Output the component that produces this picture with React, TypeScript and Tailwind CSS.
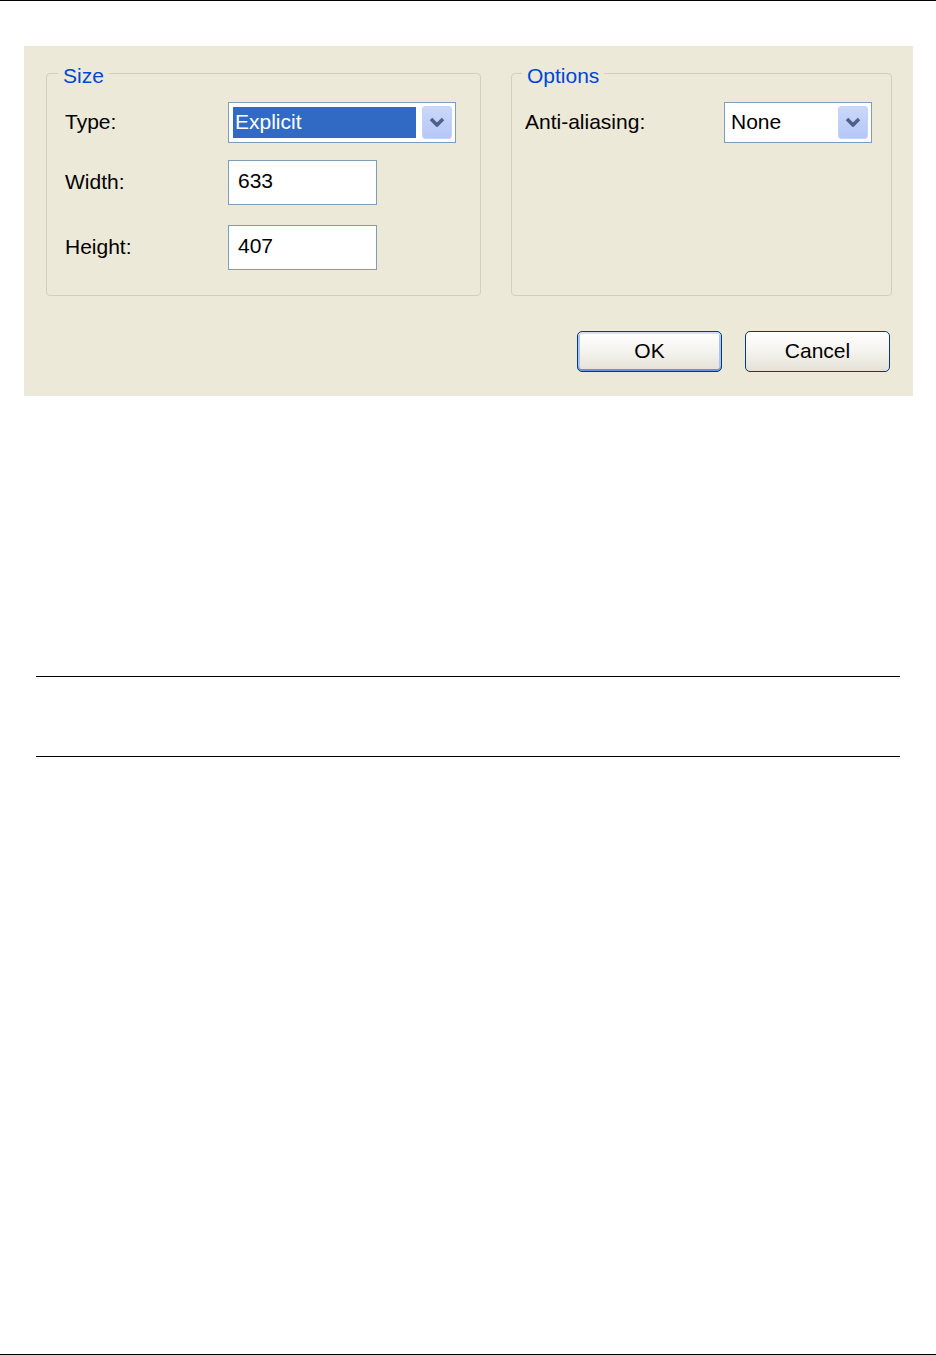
import React from 'react';

const font = { fontFamily: '"Liberation Sans", Arial, sans-serif' };

function Chevron() {
  return (
    <svg width="16" height="10" viewBox="0 0 16 10" className="block">
      <polyline points="2,2 8,8 14,2" fill="none" stroke="#4d6185" strokeWidth="3.5" />
    </svg>
  );
}

function Select({ value, width, selected }: { value: string; width: string; selected?: boolean }) {
  return (
    <div className={`${width} h-[41px] border border-[#7f9db9] bg-white p-[3px] flex`}>
      <div className="flex-1 p-[1px] mr-[5px] flex">
        <div
          className={`flex-1 flex items-center pl-[2px] ${
            selected ? 'bg-[#316ac5] text-white' : 'text-black'
          }`}
        >
          {value}
        </div>
      </div>
      <div className="w-[30px] rounded-[3px] bg-gradient-to-b from-[#c9d7fa] to-[#b4c8f6] border border-[#c3d3fb] flex items-center justify-center">
        <Chevron />
      </div>
    </div>
  );
}

function TextInput({ value }: { value: string }) {
  return (
    <div className="w-[149px] h-[45px] border border-[#7f9db9] bg-white flex items-center pl-[9px] pb-[3px]">
      {value}
    </div>
  );
}

function Button({ label, focused }: { label: string; focused?: boolean }) {
  return (
    <button
      className={`w-[145px] h-[41px] rounded-[5px] border border-[#003c74] bg-gradient-to-b from-white via-[#f4f3ee] to-[#e3e1d6] text-black ${
        focused
          ? 'shadow-[inset_0_2px_0_#cee0fc,inset_0_-2px_0_#6d92e3,inset_2px_0_0_#aac3f3,inset_-2px_0_0_#aac3f3]'
          : ''
      }`}
    >
      {label}
    </button>
  );
}

export default function App() {
  return (
    <div
      className="w-[936px] h-[1355px] bg-white border-t-[1.5px] border-b border-black flex flex-col text-[21px]"
      style={font}
    >
      <div className="ml-[24px] mt-[44.5px] w-[889px] h-[350px] bg-[#ece9d8] flex flex-col">
        <div className="flex pt-[14px] pl-[22px]">
          <fieldset className="w-[435px] h-[236px] border border-[#d0d0bf] rounded-[4px]">
            <legend className="ml-[11px] px-[5px] pt-[4px] leading-[24px] text-[#0046d5]">Size</legend>
            <div className="pl-[18px] flex flex-col">
              <div className="mt-[14px] flex items-center">
                <span className="w-[163px]">Type:</span>
                <Select value="Explicit" width="w-[228px]" selected />
              </div>
              <div className="mt-[17px] flex items-center">
                <span className="w-[163px]">Width:</span>
                <TextInput value="633" />
              </div>
              <div className="mt-[20px] flex items-center">
                <span className="w-[163px]">Height:</span>
                <TextInput value="407" />
              </div>
            </div>
          </fieldset>
          <fieldset className="ml-[30px] w-[381px] h-[236px] border border-[#d0d0bf] rounded-[4px]">
            <legend className="ml-[10px] px-[5px] pt-[4px] leading-[24px] text-[#0046d5]">Options</legend>
            <div className="pl-[13px] mt-[14px] flex items-center">
              <span className="w-[199px]">Anti-aliasing:</span>
              <Select value="None" width="w-[148px]" />
            </div>
          </fieldset>
        </div>
        <div className="mt-[35px] pr-[23px] flex justify-end gap-[23px]">
          <Button label="OK" focused />
          <Button label="Cancel" />
        </div>
      </div>
      <div className="mt-[280px] mx-[36px] border-t border-black" />
      <div className="mt-[79px] mx-[36px] border-t border-black" />
    </div>
  );
}
